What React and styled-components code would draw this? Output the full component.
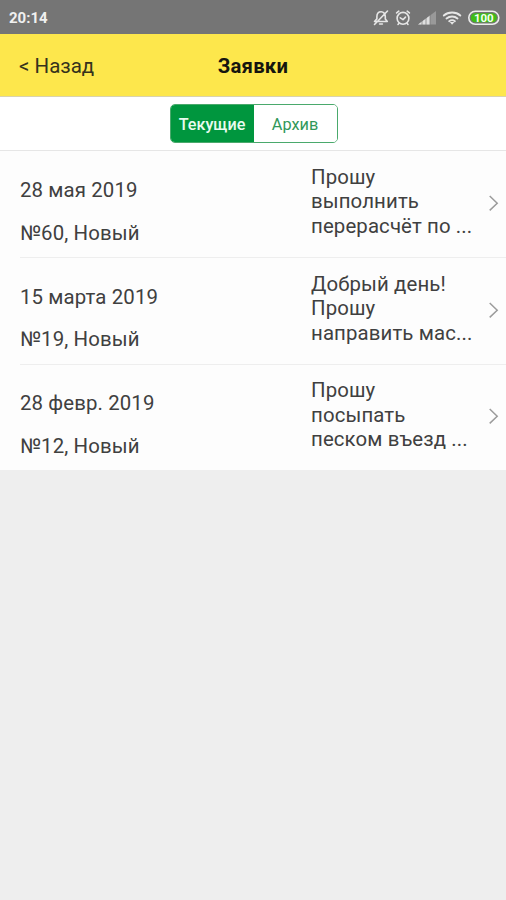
import React from "react";
import styled, { createGlobalStyle } from "styled-components";

const Global = createGlobalStyle`
  * { box-sizing: border-box; }
  html, body, #root { margin: 0; height: 100%; }
  body { background: #eeeeee; font-family: Roboto, sans-serif; overflow: hidden; }
`;

const Screen = styled.div`
  display: flex;
  flex-direction: column;
  width: 506px;
  height: 900px;
  background: #eeeeee;
`;

const StatusBar = styled.header`
  display: flex;
  align-items: center;
  justify-content: space-between;
  height: 34px;
  padding: 2px 6px 0 9px;
  background: #757575;
`;

const Clock = styled.span`
  font-size: 15px;
  font-weight: 700;
  line-height: 18px;
  color: #f0f0f0;
`;

const NavBar = styled.nav`
  display: grid;
  grid-template-columns: 1fr auto 1fr;
  align-items: center;
  height: 63px;
  padding: 1px 19px 0;
  background: #fde74c;
  border-bottom: 1px solid #d9d3ae;
`;

const BackLink = styled.a`
  font-size: 20.5px;
  color: #35321c;
`;

const Title = styled.h1`
  margin: 0;
  font-size: 20.3px;
  font-weight: 700;
  letter-spacing: 0.2px;
  color: #15150f;
`;

const FilterBar = styled.div`
  display: flex;
  justify-content: center;
  height: 54px;
  padding: 7px 0 0 1px;
  background: #fff;
`;

const Segmented = styled.div`
  display: flex;
  width: 168px;
  height: 39px;
  border: 1px solid #4aa96c;
  border-radius: 5px;
  overflow: hidden;
`;

const Segment = styled.button`
  flex: 1;
  padding: 2px 0 0;
  border: 0;
  font-family: inherit;
  font-size: ${(p) => (p.$active ? "16.2px" : "16.3px")};
  font-weight: ${(p) => (p.$active ? 500 : 400)};
  color: ${(p) => (p.$active ? "#e9fbef" : "#31985a")};
  background: ${(p) => (p.$active ? "#00963e" : "#fff")};
`;

const List = styled.ul`
  margin: -1px 0 0;
  padding: 0;
  list-style: none;
  border-top: 1px solid #e6e6e6;
  background: #fdfdfd;
`;

const Row = styled.li`
  display: grid;
  grid-template-columns: 291px 1fr 12px;
  align-items: center;
  height: 106.3px;
  margin-left: 20px;
  padding-right: 6px;
  color: #404040;
  font-size: 20.4px;
  letter-spacing: 0.12px;

  & + & { border-top: 1px solid #eeeeee; }
`;

const Meta = styled.div`
  display: flex;
  flex-direction: column;
  gap: 18px;
  padding-top: 15px;
  line-height: 24.4px;
`;

const Message = styled.p`
  margin: 0;
  padding-bottom: 5px;
  line-height: 24.4px;
  white-space: pre-line;
`;

const StatusIcons = () => (
  <svg width="128" height="20" viewBox="0 0 128 20" fill="none" stroke="#e6e6e6" strokeWidth="1.6" strokeLinecap="round" strokeLinejoin="round">
    <path d="M2.500 13.500h12.800l-2-2.600V8.600C13.300 5.700 11.600 3.800 9.100 3.800S4.900 5.700 4.900 8.600v2.300zM7.600 16h2.800M2.500 16.500L15.500 3" />
    <circle cx="31" cy="10.300" r="5.900" />
    <path d="M28.300 9.800l2.700 1.900 2.500-2.600M24.600 4.900l2.200-1.700M37.400 4.900l-2.200-1.700M27 15.300l-1 1.200M35 15.300l1 1.200" />
    <path d="M64 3v13.500H46z" fill="#999" stroke="none" />
    <path d="M58 7.500v9H46z" fill="#dedede" stroke="none" />
    <path d="M50 12v5M54 9v8M58 6v11" stroke="#777" strokeWidth=".7" />
    <path d="M71.800 7.500c4.500-4 12.200-4 16.500 0M74.500 10.500c3.200-2.600 8-2.600 11 0M77.200 13.200c1.800-1.300 4-1.300 5.700 0" strokeWidth="1.900" />
    <path d="M77.800 14h4.600l-2.300 2.700z" fill="#e6e6e6" stroke="none" />
    <rect x="96.800" y="3.300" width="30" height="13" rx="6.500" stroke="#ececec" />
    <rect x="98.800" y="5.300" width="26" height="9" rx="4.500" fill="#3fbc17" stroke="none" />
    <text x="111.800" y="14" textAnchor="middle" fill="#f6fff2" stroke="none" fontFamily="Roboto, sans-serif" fontSize="11.500" fontWeight="700">100</text>
  </svg>
);

const Chevron = () => (
  <svg width="12" height="18" viewBox="0 0 12 18" fill="none" stroke="#9c9c9c" strokeWidth="1.5">
    <path d="M1.700 1l7.500 7.200-7.500 7.200" />
  </svg>
);

const requests = [
  { date: "28 мая 2019", status: "№60, Новый", text: "Прошу\nвыполнить\nперерасчёт по ..." },
  { date: "15 марта 2019", status: "№19, Новый", text: "Добрый день!\nПрошу\nнаправить мас..." },
  { date: "28 февр. 2019", status: "№12, Новый", text: "Прошу\nпосыпать\nпеском въезд ..." },
];

export default function App() {
  return (
    <Screen>
      <Global />
      <StatusBar>
        <Clock>20:14</Clock>
        <StatusIcons />
      </StatusBar>
      <NavBar>
        <BackLink>&lt; Назад</BackLink>
        <Title>Заявки</Title>
      </NavBar>
      <FilterBar>
        <Segmented>
          <Segment $active>Текущие</Segment>
          <Segment>Архив</Segment>
        </Segmented>
      </FilterBar>
      <List>
        {requests.map((r) => (
          <Row key={r.status}>
            <Meta>
              <span>{r.date}</span>
              <span>{r.status}</span>
            </Meta>
            <Message>{r.text}</Message>
            <Chevron />
          </Row>
        ))}
      </List>
    </Screen>
  );
}
